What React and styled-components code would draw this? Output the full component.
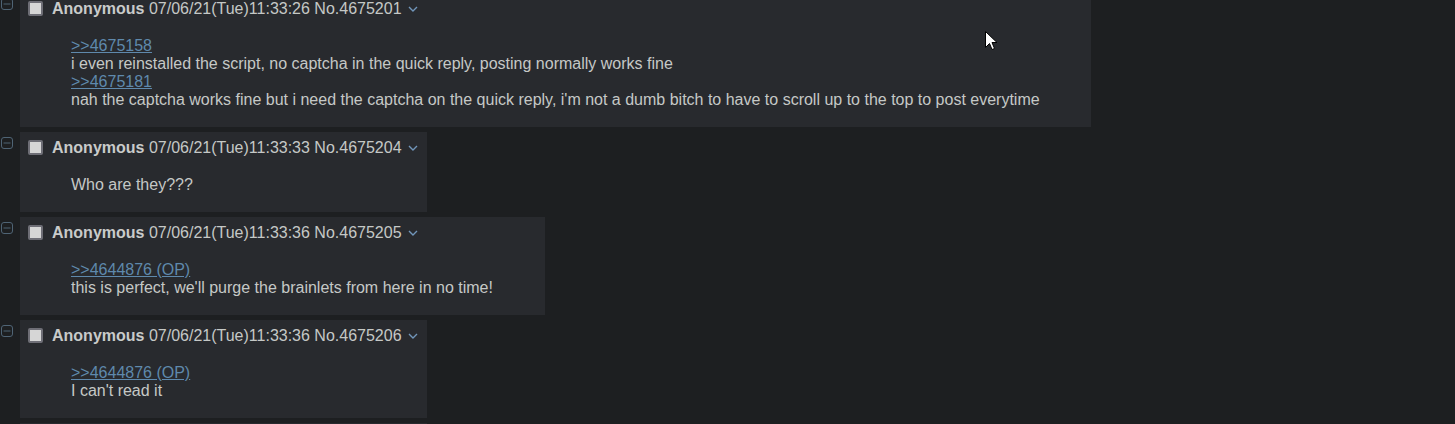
import React from "react";
import styled, { createGlobalStyle } from "styled-components";

const GlobalStyle = createGlobalStyle`
  html, body {
    margin: 0;
    padding: 0;
    background: #1d1f21;
  }
  body {
    font-family: "Liberation Sans", Arial, sans-serif;
    font-size: 16px;
    color: #c5c8c6;
    overflow: hidden;
  }
`;

const Page = styled.div`
  position: relative;
  height: 424px;
  overflow: hidden;
`;

const Thread = styled.div`
  display: flex;
  flex-direction: column;
  align-items: flex-start;
  gap: 5px;
  margin-top: -7px;
`;

const PostRow = styled.div`
  display: flex;
  align-items: flex-start;
`;

const Gutter = styled.div`
  width: 20px;
  flex: none;
  padding-top: 5px;
  padding-left: 1px;
  box-sizing: border-box;
  display: flex;
`;

const Post = styled.div`
  width: ${(p) => p.$width}px;
  box-sizing: border-box;
  background: #282a2e;
  padding: 7px 0 1px 0;
`;

const PostInfo = styled.div`
  display: flex;
  align-items: center;
  height: 18px;
  padding-left: 8px;
  white-space: nowrap;
  line-height: 18px;
`;

const Check = styled.span`
  width: 15px;
  height: 15px;
  box-sizing: border-box;
  border: 2px solid #6e6e76;
  border-radius: 2px;
  background: #d6d6d6;
  margin-right: 9px;
  margin-top: -1px;
  flex: none;
`;

const Name = styled.b`
  font-weight: bold;
  color: #c9cbca;
`;

const InfoText = styled.span`
  color: #c5c8c6;
`;

const MenuButton = styled.span`
  display: flex;
  margin-left: 6px;
  color: #7196ba;
`;

const Message = styled.blockquote`
  margin: 19px 0 17px 51px;
  line-height: 18px;
  white-space: nowrap;
`;

const QuoteLink = styled.a`
  color: #5f89ac;
  text-decoration: underline;
  text-decoration-color: #5f89ac;
  text-underline-offset: 1px;
`;

const Cursor = styled.svg`
  position: absolute;
  left: 985px;
  top: 31px;
  pointer-events: none;
`;

const CollapseIcon = () => (
  <svg width="12" height="12" viewBox="0 0 12 12">
    <rect x="0.5" y="0.5" width="11" height="11" rx="2.5" fill="none" stroke="#4f6475" strokeWidth="1" />
    <line x1="2.5" y1="6" x2="9.5" y2="6" stroke="#4f6475" strokeWidth="1" />
  </svg>
);

const Chevron = () => (
  <svg width="10" height="6" viewBox="0 0 10 6">
    <path d="M1 1 L5 5 L9 1" fill="none" stroke="currentColor" strokeWidth="1.4" />
  </svg>
);

const posts = [
  {
    no: "4675201",
    time: "07/06/21(Tue)11:33:26",
    width: 1071,
    lines: [
      { quote: ">>4675158" },
      { text: "i even reinstalled the script, no captcha in the quick reply, posting normally works fine" },
      { quote: ">>4675181" },
      {
        text:
          "nah the captcha works fine but i need the captcha on the quick reply, i'm not a dumb bitch to have to scroll up to the top to post everytime",
      },
    ],
  },
  {
    no: "4675204",
    time: "07/06/21(Tue)11:33:33",
    width: 407,
    lines: [{ text: "Who are they???" }],
  },
  {
    no: "4675205",
    time: "07/06/21(Tue)11:33:36",
    width: 525,
    lines: [
      { quote: ">>4644876 (OP)" },
      { text: "this is perfect, we'll purge the brainlets from here in no time!" },
    ],
  },
  {
    no: "4675206",
    time: "07/06/21(Tue)11:33:36",
    width: 407,
    lines: [{ quote: ">>4644876 (OP)" }, { text: "I can't read it" }],
  },
];

const NextPostEdge = styled.div`
  margin-left: 20px;
  width: 407px;
  height: 12px;
  background: #282a2e;
`;

export default function App() {
  return (
    <Page>
      <GlobalStyle />
      <Thread>
        {posts.map((p) => (
          <PostRow key={p.no}>
            <Gutter>
              <CollapseIcon />
            </Gutter>
            <Post $width={p.width}>
              <PostInfo>
                <Check />
                <InfoText>
                  <Name>Anonymous</Name> {p.time} No.{p.no}
                </InfoText>
                <MenuButton>
                  <Chevron />
                </MenuButton>
              </PostInfo>
              <Message>
                {p.lines.map((l, i) => (
                  <React.Fragment key={i}>
                    {i > 0 && <br />}
                    {l.quote ? <QuoteLink href="#">{l.quote}</QuoteLink> : l.text}
                  </React.Fragment>
                ))}
              </Message>
            </Post>
          </PostRow>
        ))}
        <NextPostEdge />
      </Thread>
      <Cursor width="13" height="20" viewBox="0 0 13 20">
        <path
          d="M0.5 0.5 L0.5 16.5 L4.5 12.5 L7 18.5 L9.5 17.5 L7 11.5 L12 11.5 Z"
          fill="#ffffff"
          stroke="#000000"
          strokeWidth="1"
        />
      </Cursor>
    </Page>
  );
}
